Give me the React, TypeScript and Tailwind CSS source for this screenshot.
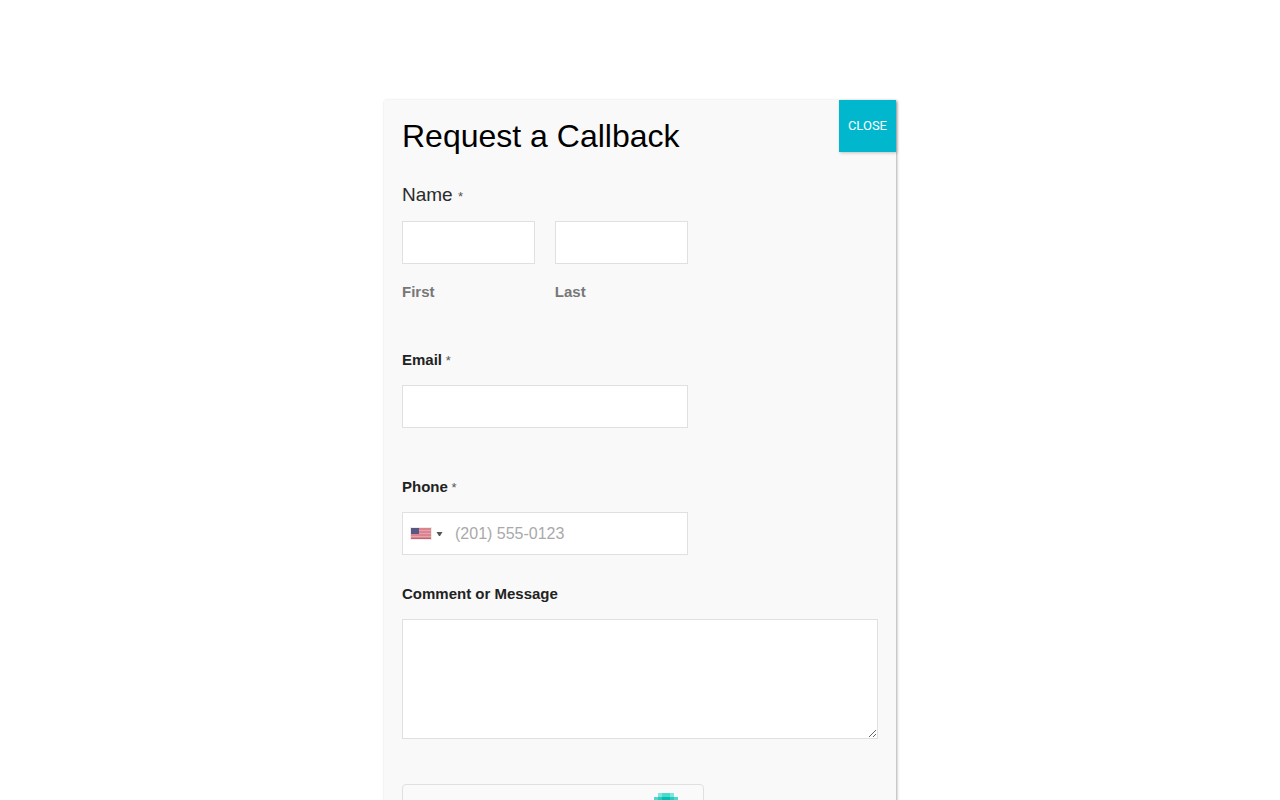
import type { ReactNode } from 'react';

const inputClass = 'block h-[43px] w-full border border-[#e0e0e0] bg-white px-2 text-base text-[#2b2b2b] outline-none';

interface FieldLabelProps {
  htmlFor: string;
  required?: boolean;
  children: ReactNode;
}

function FieldLabel({ htmlFor, required, children }: FieldLabelProps) {
  return (
    <label htmlFor={htmlFor} className="mb-[15px] block text-[15px] leading-5 font-bold text-[#222]">
      {children}
      {required && <span className="text-[13px] leading-none font-normal text-[#555]"> *</span>}
    </label>
  );
}

function UsFlag() {
  return (
    <svg width="22" height="13" viewBox="0 0 22 13" shapeRendering="crispEdges" aria-hidden="true">
      <rect width="22" height="13" fill="#ececec" />
      <rect x="1" y="1" width="20" height="11" fill="#db838e" />
      {[3, 6, 9].map((y) => (
        <rect key={y} x="1" y={y} width="20" height="1" fill="#e4a3ab" />
      ))}
      <rect x="1" y="11" width="20" height="1" fill="#c65f6e" />
      <rect x="1" y="1" width="8" height="6" fill="#585784" />
    </svg>
  );
}

function CaptchaLogo() {
  return (
    <svg width="32" height="32" viewBox="0 0 32 32" shapeRendering="crispEdges" aria-hidden="true">
      <path d="M8 0h16v4h4v24h-4v4H8v-4H4V4h4z" fill="#4dd9cd" />
      <path d="M8 0h4v4H8zM20 0h4v4h-4z" fill="#80e5dc" />
      <path d="M12 4h8v24h-8z" fill="#00bfb2" />
      <path d="M8 4h4v24H8zM20 4h4v24h-4z" fill="#26ccc0" />
    </svg>
  );
}

export default function App() {
  return (
    <main className="h-screen overflow-hidden bg-white pt-[100px] font-['Liberation_Sans',Arial,sans-serif]">
      <div
        role="dialog"
        aria-labelledby="popup-title"
        className="relative mx-auto w-2/5 rounded-[1px] bg-[#f9f9f9] p-[18px] shadow-[1px_1px_3px_0_rgba(2,2,2,0.33)]"
      >
        <button
          type="button"
          className="absolute top-0 right-0 h-[52px] bg-[#00b7cd] px-[9px] font-[Roboto,sans-serif] text-[13px] text-white shadow-[1px_1px_3px_0_rgba(2,2,2,0.23)]"
        >
          CLOSE
        </button>

        <h2 id="popup-title" className="text-[32px] leading-9 text-black">
          Request a Callback
        </h2>

        <form className="mt-[29px]">
          {/* Name */}
          <fieldset className="mb-12 w-3/5">
            <legend className="mb-[14px] text-[19px] leading-6 text-[#2b2b2b]">
              Name <span className="text-[13px] leading-none text-[#555]">*</span>
            </legend>
            <div className="grid grid-cols-2 gap-5">
              <div>
                <input id="first-name" type="text" className={inputClass} />
                <label htmlFor="first-name" className="mt-[18px] block text-[15px] leading-5 font-bold text-[#777]">
                  First
                </label>
              </div>
              <div>
                <input id="last-name" type="text" className={inputClass} />
                <label htmlFor="last-name" className="mt-[18px] block text-[15px] leading-5 font-bold text-[#777]">
                  Last
                </label>
              </div>
            </div>
          </fieldset>

          {/* Email */}
          <div className="mb-[49px] w-3/5">
            <FieldLabel htmlFor="email" required>Email</FieldLabel>
            <input id="email" type="email" className={inputClass} />
          </div>

          {/* Phone */}
          <div className="mb-[29px] w-3/5">
            <FieldLabel htmlFor="phone" required>Phone</FieldLabel>
            <div className="flex h-[43px] items-center border border-[#e0e0e0] bg-white pl-[7px]">
              <button type="button" aria-label="United States" className="flex items-center gap-1">
                <UsFlag />
                <svg width="7" height="4" viewBox="0 0 7 4" aria-hidden="true">
                  <path d="M0.5 0h6L4 4H3z" fill="#555" />
                </svg>
              </button>
              <input
                id="phone"
                type="tel"
                placeholder="(201) 555-0123"
                className="ml-3 min-w-0 flex-1 text-base outline-none placeholder:text-[#a9a9a9]"
              />
            </div>
          </div>

          {/* Message */}
          <div className="mb-[45px]">
            <FieldLabel htmlFor="message">Comment or Message</FieldLabel>
            <textarea id="message" className="block h-[120px] w-full resize-y border border-[#e0e0e0] bg-white p-2 outline-none" />
          </div>

          {/* Captcha */}
          <div className="flex h-[76px] w-[302px] max-w-full justify-end rounded border border-[#e0e0e0] bg-[#fafafa] pt-2 pr-[21px]">
            <CaptchaLogo />
          </div>
        </form>
      </div>
    </main>
  );
}
